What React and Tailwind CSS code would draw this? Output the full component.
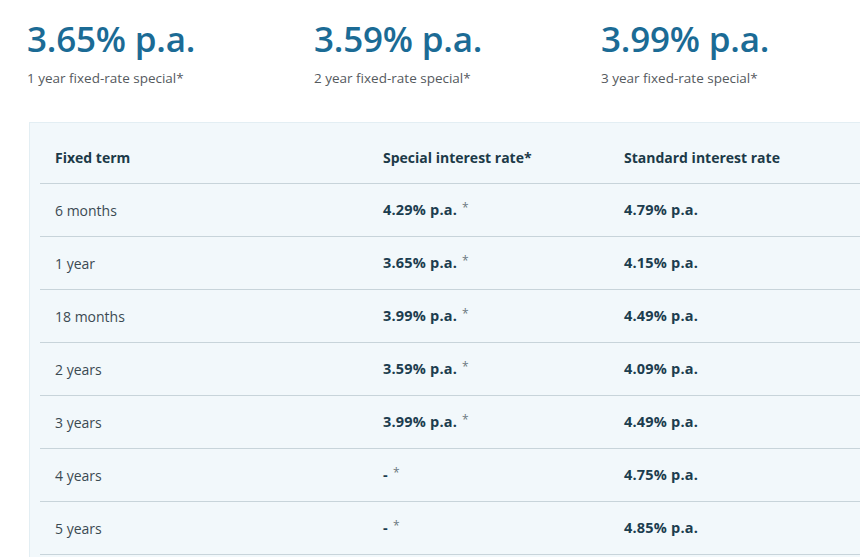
import React from "react";

const stats = [
  { rate: "3.65% p.a.", label: "1 year fixed-rate special*" },
  { rate: "3.59% p.a.", label: "2 year fixed-rate special*" },
  { rate: "3.99% p.a.", label: "3 year fixed-rate special*" },
];

const rows = [
  ["6 months", "4.29% p.a.", "4.79% p.a."],
  ["1 year", "3.65% p.a.", "4.15% p.a."],
  ["18 months", "3.99% p.a.", "4.49% p.a."],
  ["2 years", "3.59% p.a.", "4.09% p.a."],
  ["3 years", "3.99% p.a.", "4.49% p.a."],
  ["4 years", "-", "4.75% p.a."],
  ["5 years", "-", "4.85% p.a."],
];

export default function App() {
  return (
    <div
      className="w-[860px] h-[557px] overflow-hidden bg-white"
      style={{ fontFamily: '"Open Sans", "Noto Sans", sans-serif' }}
    >
      <div className="flex pl-[27px] pt-[21px]">
        {stats.map((s) => (
          <div key={s.rate} className="w-[287px] shrink-0 flex flex-col">
            <div className="text-[35px] leading-[35px] font-semibold text-[#1b6b95] tracking-[-0.2px]">
              {s.rate}
            </div>
            <div className="mt-[12px] text-[13.5px] leading-[20px] text-[#555a5e]">
              {s.label}
            </div>
          </div>
        ))}
      </div>
      <div className="ml-[29px] mt-[34px] bg-[#f2f8fb] border-t border-l border-[#e3eef3] pl-[10px] pt-[8px] pb-[40px]">
        <div className="flex h-[53px] items-center border-b border-[#c8d4da] text-[14px] font-bold text-[#1c3a48]">
          <div className="w-[328px] shrink-0 pl-[15px]">Fixed term</div>
          <div className="w-[241px] shrink-0 pl-[15px]">Special interest rate*</div>
          <div className="flex-1 pl-[15px]">Standard interest rate</div>
        </div>
        {rows.map((r) => (
          <div
            key={r[0]}
            className="flex h-[53px] items-center border-b border-[#c8d4da] text-[14px]"
          >
            <div className="w-[328px] shrink-0 pl-[15px] text-[#3b4a52]">{r[0]}</div>
            <div className="w-[241px] shrink-0 pl-[15px]">
              <span className="font-bold text-[14.5px] tracking-[0.2px] text-[#1c3d4f]">{r[1]}</span>
              <span className="relative -top-[3px] ml-[5px] text-[12px] text-[#6b7880]">*</span>
            </div>
            <div className="flex-1 pl-[15px] font-bold text-[14.5px] tracking-[0.2px] text-[#1c3d4f]">{r[2]}</div>
          </div>
        ))}
      </div>
    </div>
  );
}
